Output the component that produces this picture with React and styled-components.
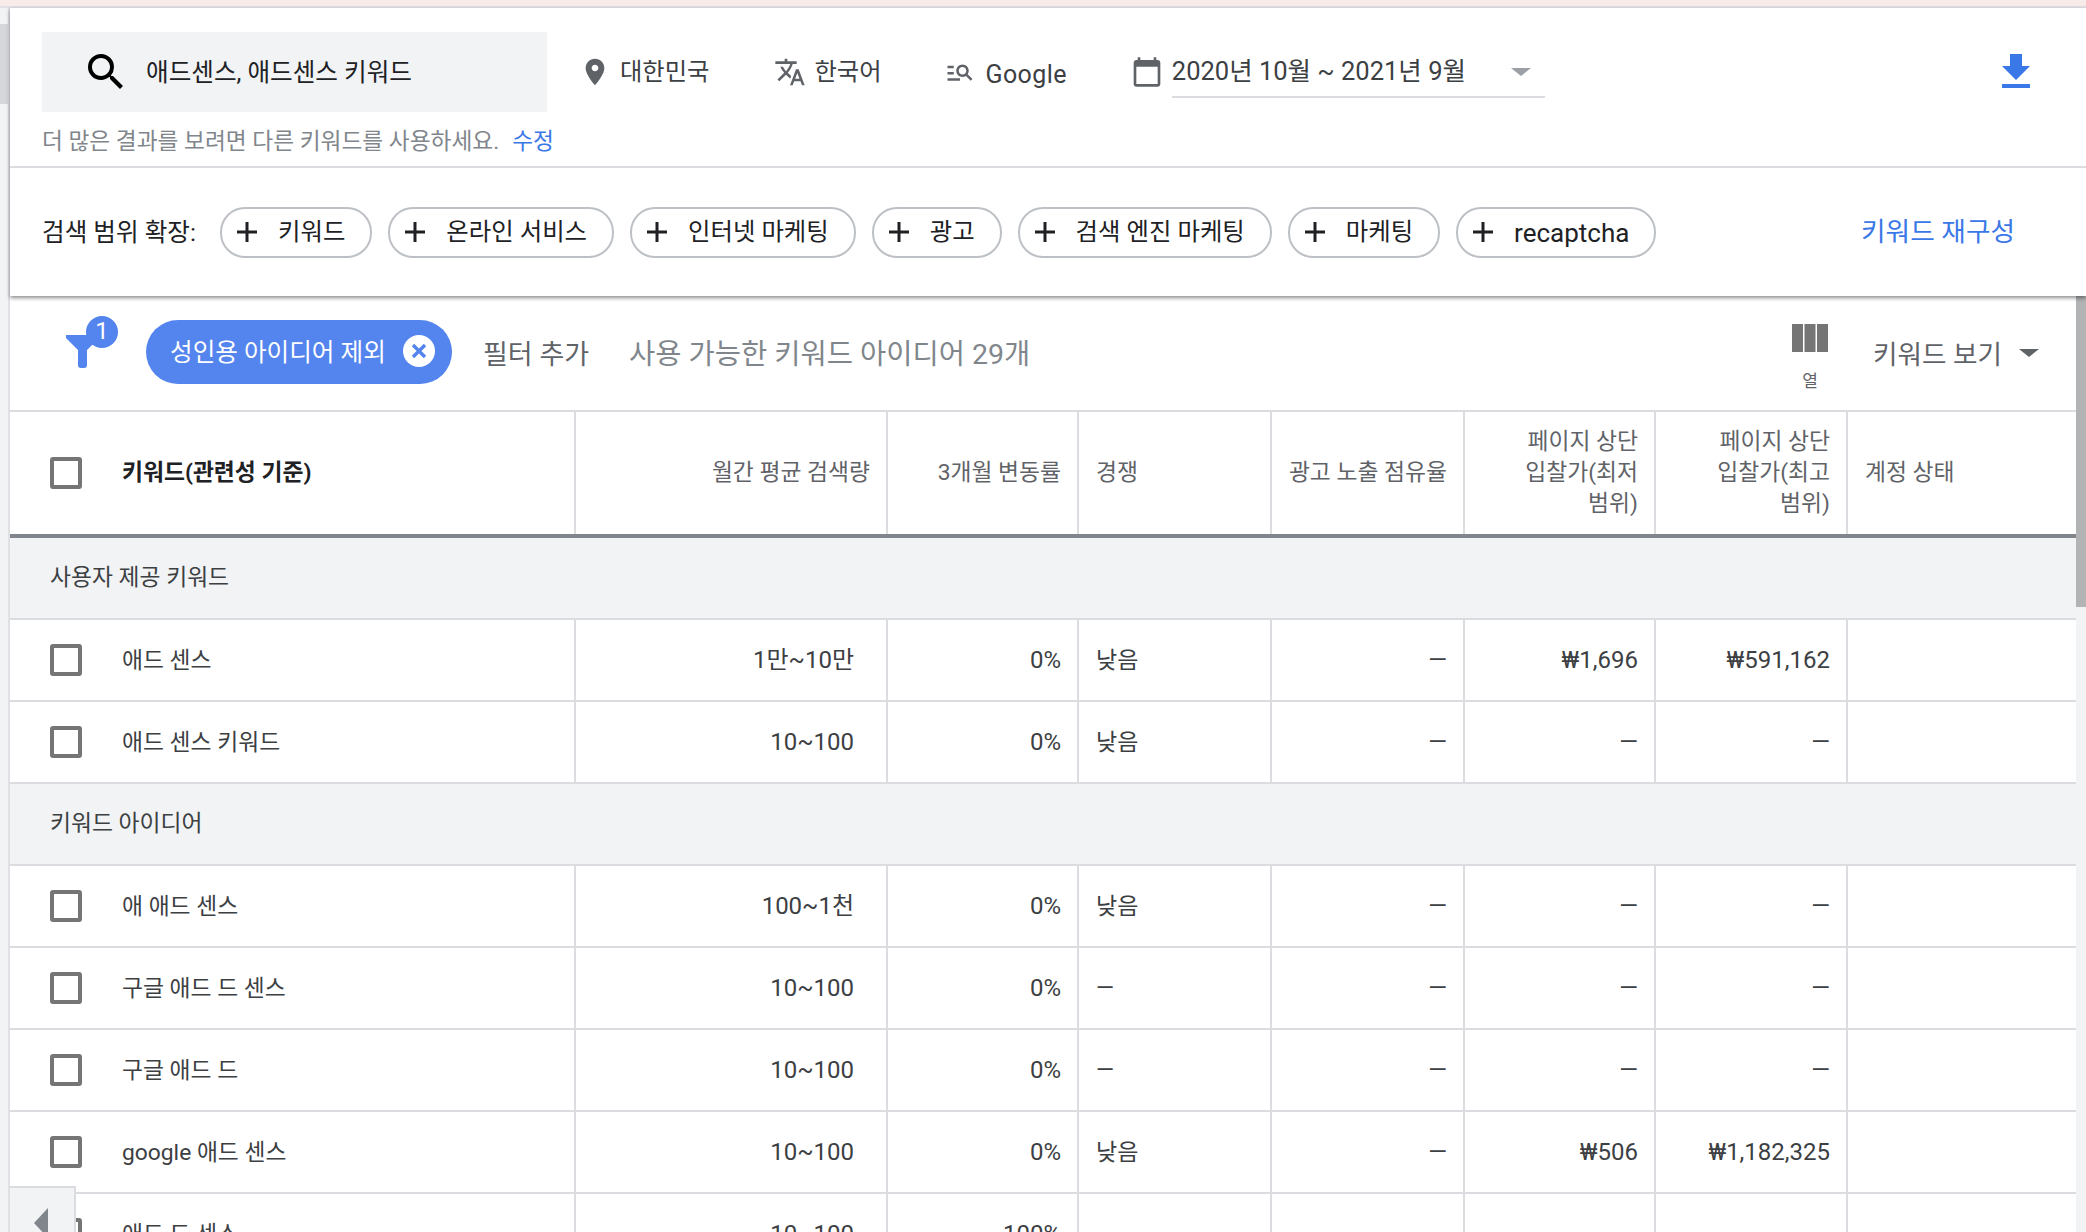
import React from 'react';
import styled, { createGlobalStyle } from 'styled-components';

const GlobalStyle = createGlobalStyle`
  html, body {
    margin: 0;
    padding: 0;
    background: #f1f3f4;
    font-family: Roboto, "Noto Sans CJK KR", sans-serif;
  }
  * { box-sizing: border-box; }
`;

const COLUMNS = '566px 312px 191px 193px 193px 191px 192px 1fr';
const LINE = '#dadce0';

const Page = styled.div`
  width: 2086px;
  height: 1232px;
  overflow: hidden;
  position: relative;
  display: flex;
  flex-direction: column;
`;

const TopStrip = styled.div`
  flex: none;
  height: 8px;
  background: #f8ecea;
  border-bottom: 2px solid #e2e0e4;
`;

const Body = styled.div`
  flex: 1;
  display: flex;
  min-height: 0;
`;

const LeftRail = styled.div`
  flex: none;
  width: 10px;
  background: #f1f3f4;
  border-right: 2px solid #e0e1e5;
  padding-top: 16px;
`;

const RailThumb = styled.div`
  height: 80px;
  background: #d5d7da;
`;

const Content = styled.div`
  flex: 1;
  display: flex;
  flex-direction: column;
  min-width: 0;
`;

const Header = styled.header`
  flex: none;
  height: 288px;
  background: #fff;
  position: relative;
  z-index: 2;
  box-shadow: 0 2px 4px rgba(0, 0, 0, 0.45);
`;

const Label = styled.span`
  padding-bottom: ${(p) => p.$lift || 5}px;
`;

const QuerySection = styled.div`
  height: 160px;
  padding: 24px 32px 0;
  border-bottom: 2px solid ${LINE};
`;

const QueryRow = styled.div`
  display: flex;
  align-items: center;
  height: 80px;
`;

const SearchBox = styled.div`
  width: 505px;
  height: 80px;
  flex: none;
  display: flex;
  align-items: center;
  gap: 16px;
  padding-left: 40px;
  background: #f1f3f4;
  font-size: 24.6px;
  color: #202124;
`;

const Setting = styled.div`
  display: flex;
  align-items: center;
  flex: none;
  margin-left: ${(p) => p.$left}px;
  gap: ${(p) => p.$gap}px;
  font-size: 24.3px;
  color: #3c4043;
`;

const GoogleLabel = styled.span`
  position: relative;
  top: 2px;
  font-size: 25px;
  letter-spacing: 0.4px;
`;

const DateField = styled.div`
  width: 373px;
  height: 50px;
  margin-top: 1px;
  display: flex;
  align-items: center;
  justify-content: space-between;
  padding-right: 14px;
  border-bottom: 2px solid ${LINE};
  font-size: 25.5px;
  color: #3c4043;
`;

const Caret = styled.span`
  width: 0;
  height: 0;
  flex: none;
  border-left: ${(p) => p.$size}px solid transparent;
  border-right: ${(p) => p.$size}px solid transparent;
  border-top: ${(p) => p.$size * 0.85}px solid ${(p) => p.$color};
`;

const DownloadIcon = styled.svg`
  margin-left: auto;
  margin-right: 14px;
  flex: none;
`;

const Hint = styled.div`
  margin-top: 15px;
  font-size: 22.7px;
  line-height: 30px;
  color: #80868b;
`;

const HintLink = styled.a`
  margin-left: 13px;
  color: #3b78e7;
`;

const ChipSection = styled.div`
  height: 128px;
  display: flex;
  align-items: center;
  padding: 0 71px 0 32px;
`;

const ChipLabel = styled.span`
  flex: none;
  width: 178px;
  padding-bottom: 5px;
  font-size: 24.6px;
  color: #202124;
`;

const Chips = styled.div`
  display: flex;
  gap: 16px;
`;

const Chip = styled.div`
  height: 51px;
  display: flex;
  align-items: center;
  gap: 20px;
  padding: 0 25px 0 14px;
  border: 2px solid #bdc1c6;
  border-radius: 25px;
  font-size: ${(p) => (p.$latin ? 26 : 24.4)}px;
  color: #202124;
`;

const LatinLabel = styled.span`
  padding-top: 2px;
`;

const Rebuild = styled.a`
  margin-left: auto;
  padding-bottom: 5px;
  font-size: 26.7px;
  color: #3b78e7;
`;

const Lower = styled.div`
  flex: 1;
  display: flex;
  min-height: 0;
  background: #fff;
`;

const Main = styled.main`
  flex: 1;
  min-width: 0;
`;

const ScrollTrack = styled.div`
  flex: none;
  width: 10px;
  background: #f1f3f4;
`;

const ScrollThumb = styled.div`
  height: 311px;
  background: #b2b3b5;
`;

const FilterRow = styled.div`
  height: 116px;
  display: flex;
  align-items: center;
  padding: 0 37px 0 56px;
  border-bottom: 2px solid ${LINE};
`;

const FilterIconBox = styled.div`
  position: relative;
  flex: none;
  width: 80px;
  height: 56px;
  margin-top: -18px;
`;

const Badge = styled.span`
  position: absolute;
  left: 20px;
  top: 0;
  width: 32px;
  height: 32px;
  border-radius: 50%;
  background: #5484ed;
  color: #fff;
  font-size: 24px;
  line-height: 30px;
  text-align: center;
`;

const FilterChip = styled.div`
  flex: none;
  width: 306px;
  height: 64px;
  margin-top: -3px;
  display: flex;
  align-items: center;
  justify-content: space-between;
  padding: 0 17px 0 24px;
  border-radius: 32px;
  background: #5484ed;
  color: #fff;
  font-size: 24.6px;
`;

const CloseHolder = styled.span`
  display: flex;
  padding-bottom: 2px;
`;

const AddFilter = styled.span`
  margin-left: 31px;
  padding-bottom: 1px;
  font-size: 27px;
  color: #5f6368;
`;

const IdeaCount = styled.span`
  margin-left: 40px;
  padding-bottom: 3px;
  font-size: 28.5px;
  color: #80868b;
`;

const ColumnsButton = styled.div`
  margin-left: auto;
  margin-top: 8px;
  width: 36px;
  display: flex;
  flex-direction: column;
  align-items: center;
  gap: 19px;
  font-size: 17px;
  line-height: 20px;
  color: #5f6368;
`;

const ViewPicker = styled.div`
  margin-left: 45px;
  display: flex;
  align-items: center;
  gap: 17px;
  font-size: 26.6px;
  color: #5f6368;
`;

const Row = styled.div`
  display: grid;
  grid-template-columns: ${COLUMNS};
  height: ${(p) => p.$height || 82}px;
  border-bottom: ${(p) => (p.$head ? '4px solid #80868b' : `2px solid ${LINE}`)};
`;

const Cell = styled.div`
  display: flex;
  align-items: center;
  justify-content: ${(p) => (p.$left ? 'flex-start' : 'flex-end')};
  text-align: ${(p) => (p.$left ? 'left' : 'right')};
  word-break: keep-all;
  padding: 0 ${(p) => p.$right || 16}px ${(p) => (p.$head ? 2 : 0)}px ${(p) => (p.$left ? 17 : 10)}px;
  border-right: 2px solid ${LINE};
  font-size: ${(p) => (p.$head ? 22.8 : p.$left ? 23 : 24)}px;
  line-height: 31px;
  color: ${(p) => (p.$head ? '#5f6368' : '#3c4043')};
  &:last-child { border-right: none; }
`;

const KeywordCell = styled.div`
  display: flex;
  align-items: center;
  gap: 40px;
  padding-left: 40px;
  border-right: 2px solid ${LINE};
  font-size: 22.8px;
  font-weight: ${(p) => (p.$head ? 700 : 400)};
  color: ${(p) => (p.$head ? '#202124' : '#3c4043')};
`;

const Checkbox = styled.span`
  flex: none;
  width: 32px;
  height: 32px;
  border: 4px solid #757575;
  border-radius: 3px;
  background: #fff;
`;

const GroupRow = styled.div`
  height: 82px;
  display: flex;
  align-items: center;
  padding-left: 40px;
  padding-bottom: 6px;
  background: #f1f3f4;
  border-bottom: 2px solid ${LINE};
  font-size: 22.8px;
  color: #3c4043;
`;

const BackButton = styled.div`
  position: absolute;
  left: 10px;
  bottom: 0;
  width: 66px;
  height: 46px;
  padding: 20px 0 0 24px;
  background: #f1f3f4;
  border-top: 2px solid ${LINE};
  border-right: 2px solid ${LINE};
  z-index: 1;
`;

const BackArrow = styled.span`
  display: block;
  width: 0;
  height: 0;
  border-top: 15px solid transparent;
  border-bottom: 15px solid transparent;
  border-right: 14px solid #80868b;
`;

function SearchIcon() {
  return (
    <svg width="48" height="48" viewBox="0 0 24 24" fill="#000">
      <path d="M15.5 14h-.79l-.28-.27A6.471 6.471 0 0 0 16 9.5 6.5 6.5 0 1 0 9.5 16c1.61 0 3.09-.59 4.23-1.57l.27.28v.79l5 4.99L20.49 19l-4.99-5zm-6 0C7.01 14 5 11.99 5 9.5S7.01 5 9.5 5 14 7.01 14 9.5 11.99 14 9.5 14z" />
    </svg>
  );
}

function GreyIcon({ size, d }) {
  return (
    <svg width={size} height={size} viewBox="0 0 24 24" fill="#5f6368">
      <path d={d} />
    </svg>
  );
}

const PIN = 'M12 2C8.13 2 5 5.13 5 9c0 5.25 7 13 7 13s7-7.75 7-13c0-3.87-3.13-7-7-7zm0 9.5c-1.38 0-2.5-1.12-2.5-2.5s1.12-2.5 2.5-2.5 2.5 1.12 2.5 2.5-1.12 2.5-2.5 2.5z';
const TRANSLATE = 'M12.87 15.07l-2.54-2.51.03-.03c1.74-1.94 2.98-4.17 3.71-6.53H17V4h-7V2H8v2H1v1.99h11.17C11.5 7.92 10.44 9.75 9 11.35 8.07 10.32 7.3 9.19 6.69 8h-2c.73 1.63 1.73 3.17 2.98 4.56l-5.09 5.02L4 19l5-5 3.11 3.11.76-2.04zM18.5 10h-2L12 22h2l1.12-3h4.75L21 22h2l-4.5-12zm-2.62 7l1.62-4.33L19.12 17h-3.24z';
const MANAGE_SEARCH = 'M7 9H2V7h5v2zm0 3H2v2h5v-2zm13.59 7-3.83-3.83c-.8.52-1.74.83-2.76.83-2.76 0-5-2.24-5-5s2.24-5 5-5 5 2.24 5 5c0 1.02-.31 1.96-.83 2.75L22 17.59 20.59 19zM17 11c0-1.65-1.35-3-3-3s-3 1.35-3 3 1.35 3 3 3 3-1.35 3-3zM2 19h10v-2H2v2z';
const CALENDAR = 'M20 3h-1V1h-2v2H7V1H5v2H4c-1.1 0-2 .9-2 2v16c0 1.1.9 2 2 2h16c1.1 0 2-.9 2-2V5c0-1.1-.9-2-2-2zm0 18H4V8h16v13z';

function PlusIcon() {
  return (
    <svg width="22" height="22" viewBox="0 0 22 22" stroke="#202124" strokeWidth="3">
      <path d="M11 1v20M1 11h20" />
    </svg>
  );
}

function FunnelIcon() {
  return (
    <svg width="40" height="56" viewBox="0 0 40 56" fill="#5484ed">
      <path d="M0 19h27l4 5-10 10v15a3 3 0 0 1-3 3h-3a3 3 0 0 1-3-3V34L0 22z" />
    </svg>
  );
}

function CloseIcon() {
  return (
    <svg width="32" height="32" viewBox="0 0 32 32">
      <circle cx="16" cy="16" r="16" fill="#fff" />
      <path d="M10 10l12 12M22 10L10 22" stroke="#5484ed" strokeWidth="3.4" />
    </svg>
  );
}

function ColumnsIcon() {
  return (
    <svg width="36" height="28" viewBox="0 0 36 28" fill="#757575">
      <rect x="0" width="11" height="28" />
      <rect x="12.5" width="11" height="28" />
      <rect x="25" width="11" height="28" />
    </svg>
  );
}

const suggestions = ['키워드', '온라인 서비스', '인터넷 마케팅', '광고', '검색 엔진 마케팅', '마케팅', 'recaptcha'];

const headCells = [
  ['월간 평균 검색량'],
  ['3개월 변동률'],
  ['경쟁', true],
  ['광고 노출 점유율'],
  ['페이지 상단 입찰가(최저 범위)'],
  ['페이지 상단 입찰가(최고 범위)'],
  ['계정 상태', true],
];

const DASH = '—';

const given = [
  ['애드 센스', '1만~10만', '0%', '낮음', DASH, '₩1,696', '₩591,162'],
  ['애드 센스 키워드', '10~100', '0%', '낮음', DASH, DASH, DASH],
];

const ideas = [
  ['애 애드 센스', '100~1천', '0%', '낮음', DASH, DASH, DASH],
  ['구글 애드 드 센스', '10~100', '0%', DASH, DASH, DASH, DASH],
  ['구글 애드 드', '10~100', '0%', DASH, DASH, DASH, DASH],
  ['google 애드 센스', '10~100', '0%', '낮음', DASH, '₩506', '₩1,182,325'],
  ['애드 드 센스', '10~100', '100%', '', '', '', ''],
];

function KeywordRow({ data }) {
  const [keyword, volume, change, competition, share, low, high] = data;
  return (
    <Row>
      <KeywordCell>
        <Checkbox />
        <Label $lift={4}>{keyword}</Label>
      </KeywordCell>
      <Cell $right={32}>{volume}</Cell>
      <Cell>{change}</Cell>
      <Cell $left>{competition}</Cell>
      <Cell>{share}</Cell>
      <Cell>{low}</Cell>
      <Cell>{high}</Cell>
      <Cell $left />
    </Row>
  );
}

export default function App() {
  return (
    <Page>
      <GlobalStyle />
      <TopStrip />
      <Body>
        <LeftRail>
          <RailThumb />
        </LeftRail>
        <Content>
          <Header>
            <QuerySection>
              <QueryRow>
                <SearchBox>
                  <SearchIcon />
                  <Label>애드센스, 애드센스 키워드</Label>
                </SearchBox>
                <Setting $left={32} $gap={9}>
                  <GreyIcon size={32} d={PIN} />
                  <Label>대한민국</Label>
                </Setting>
                <Setting $left={65} $gap={8}>
                  <GreyIcon size={32} d={TRANSLATE} />
                  <Label>한국어</Label>
                </Setting>
                <Setting $left={64} $gap={10}>
                  <GreyIcon size={30} d={MANAGE_SEARCH} />
                  <GoogleLabel>Google</GoogleLabel>
                </Setting>
                <Setting $left={64} $gap={9}>
                  <GreyIcon size={32} d={CALENDAR} />
                  <DateField>
                    <Label $lift={6}>2020년 10월 ~ 2021년 9월</Label>
                    <Caret $size={10} $color="#9aa0a6" />
                  </DateField>
                </Setting>
                <DownloadIcon width="48" height="48" viewBox="0 0 24 24" fill="#3b78e7">
                  <path d="M19 9h-4V3H9v6H5l7 7 7-7zM5 18v2h14v-2H5z" />
                </DownloadIcon>
              </QueryRow>
              <Hint>
                더 많은 결과를 보려면 다른 키워드를 사용하세요.
                <HintLink>수정</HintLink>
              </Hint>
            </QuerySection>
            <ChipSection>
              <ChipLabel>검색 범위 확장:</ChipLabel>
              <Chips>
                {suggestions.map((text) => {
                  const latin = text === 'recaptcha';
                  return (
                    <Chip key={text} $latin={latin}>
                      <PlusIcon />
                      {latin ? <LatinLabel>{text}</LatinLabel> : <Label>{text}</Label>}
                    </Chip>
                  );
                })}
              </Chips>
              <Rebuild>키워드 재구성</Rebuild>
            </ChipSection>
          </Header>
          <Lower>
            <Main>
              <FilterRow>
                <FilterIconBox>
                  <FunnelIcon />
                  <Badge>1</Badge>
                </FilterIconBox>
                <FilterChip>
                  <Label $lift={4}>성인용 아이디어 제외</Label>
                  <CloseHolder>
                    <CloseIcon />
                  </CloseHolder>
                </FilterChip>
                <AddFilter>필터 추가</AddFilter>
                <IdeaCount>사용 가능한 키워드 아이디어 29개</IdeaCount>
                <ColumnsButton>
                  <ColumnsIcon />
                  열
                </ColumnsButton>
                <ViewPicker>
                  <Label $lift={2}>키워드 보기</Label>
                  <Caret $size={10} $color="#5f6368" />
                </ViewPicker>
              </FilterRow>
              <Row $head $height={126}>
                <KeywordCell $head>
                  <Checkbox />
                  <Label $lift={6}>키워드(관련성 기준)</Label>
                </KeywordCell>
                {headCells.map(([text, left]) => (
                  <Cell key={text} $head $left={left}>
                    {text}
                  </Cell>
                ))}
              </Row>
              <GroupRow>사용자 제공 키워드</GroupRow>
              {given.map((row) => (
                <KeywordRow key={row[0]} data={row} />
              ))}
              <GroupRow>키워드 아이디어</GroupRow>
              {ideas.map((row) => (
                <KeywordRow key={row[0]} data={row} />
              ))}
            </Main>
            <ScrollTrack>
              <ScrollThumb />
            </ScrollTrack>
          </Lower>
        </Content>
      </Body>
      <BackButton>
        <BackArrow />
      </BackButton>
    </Page>
  );
}
